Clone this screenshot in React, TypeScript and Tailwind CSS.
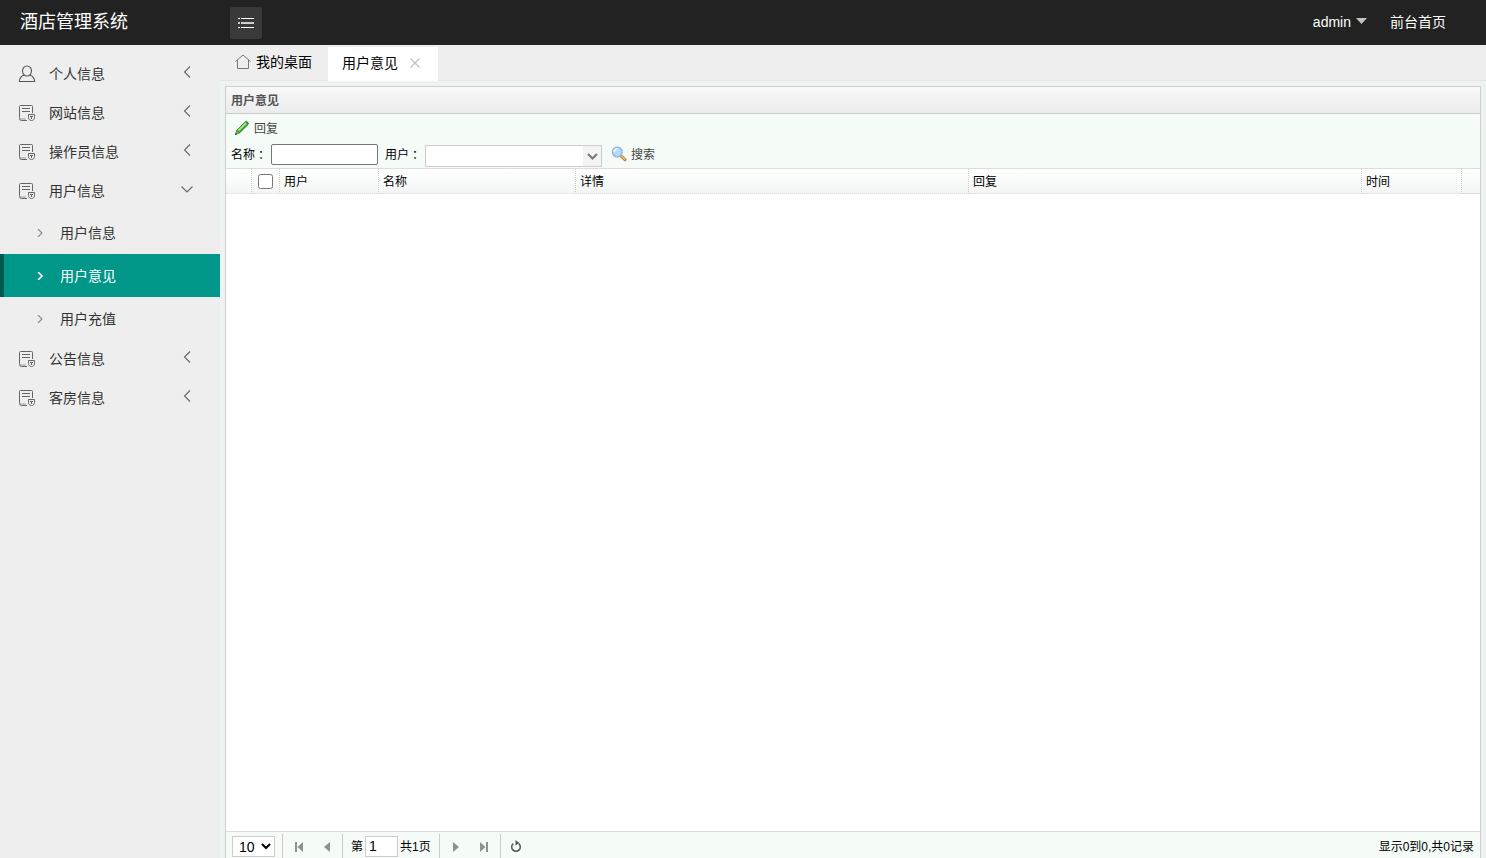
import { useState } from 'react'
import type { ReactNode } from 'react'

const menus = [
  { label: '个人信息', icon: 'user' },
  { label: '网站信息', icon: 'form' },
  { label: '操作员信息', icon: 'form' },
  { label: '用户信息', icon: 'form', children: ['用户信息', '用户意见', '用户充值'] },
  { label: '公告信息', icon: 'form' },
  { label: '客房信息', icon: 'form' },
]

const columns = [
  { label: '用户', width: 'w-[99px]' },
  { label: '名称', width: 'w-[197px]' },
  { label: '详情', width: '' },
  { label: '回复', width: '' },
  { label: '时间', width: 'w-[100px]' },
]

const UserIcon = () => (
  <svg width="18" height="18" viewBox="0 0 18 18" fill="none" stroke="#555" strokeWidth="1.1">
    <ellipse cx="9" cy="6" rx="4.500" ry="5" />
    <path d="M6.300 10C3.600 10.800 1.600 13 1.300 16.500h15.400c-.3-3.500-2.300-5.700-5-6.500" strokeLinejoin="round" />
  </svg>
)

const FormIcon = () => (
  <svg width="18" height="18" viewBox="0 0 18 18" fill="none" stroke="#666" strokeWidth="1">
    <path d="M9 16.500H3.500a2 2 0 0 1-2-2v-12a1 1 0 0 1 1-1h11a1 1 0 0 1 1 1v6.500" />
    <path d="M4 4.500h8M4 7.500h8" />
    <path d="M1.500 13.500q0 1.500 1.500 1.500h5" stroke="#999" />
    <path d="M10.500 10.500h6v3c0 1.800-1.200 3-3 3s-3-1.200-3-3z" />
    <path d="M12 12.500h3M13.500 12.500v2.500" />
  </svg>
)

const Chevron = ({ open }: { open: boolean }) => (
  <svg width="12" height="12" viewBox="0 0 12 12" fill="none" stroke="#666" strokeWidth="1.1">
    {open ? <path d="M.5 3.500 6 9l5.500-5.500" /> : <path d="M9 .5 3.500 6 9 11.500" />}
  </svg>
)

const HomeIcon = () => (
  <svg width="16" height="16" viewBox="0 0 16 16" fill="none" stroke="#777" strokeWidth="1">
    <path d="M.5 7.500 8 1l7.500 6.500M2.500 6v8.500h11V6" />
  </svg>
)

const PencilIcon = () => (
  <svg width="16" height="16" viewBox="0 0 16 16">
    <path d="M1.500 14.500 3 10.300 11 2.100q1.300-1.200 2.600 0t.2 2.600L5.600 12.800z" fill="#3fa827" stroke="#1f7a14" strokeWidth="1" />
    <path d="M4.300 10.700 12 3" stroke="#a9e58d" strokeWidth="1.800" />
    <path d="m1.500 14.500 1.100-3.200 2 1.900z" fill="#e9e3b4" stroke="#1f7a14" strokeWidth=".5" />
    <path d="m1.200 14.800.7-1.900 1.200 1.200z" fill="#222" />
  </svg>
)

const SearchIcon = () => (
  <svg width="16" height="16" viewBox="0 0 16 16">
    <path d="m10.400 10.200 3.600 3.400" stroke="#b97a3c" strokeWidth="3" strokeLinecap="round" />
    <path d="m10.600 10.200 3.200 3" stroke="#f0b26a" strokeWidth="1.800" strokeLinecap="round" />
    <circle cx="6.300" cy="6" r="4.900" fill="#b5d9fa" stroke="#8fb0da" strokeWidth="1.300" />
    <path d="M3.300 6c0-2 1.300-3.200 3.200-3.200" stroke="#f1f9ff" strokeWidth="1.500" fill="none" />
  </svg>
)

const PagerButton = ({ label, children }: { label: string; children: ReactNode }) => (
  <button type="button" aria-label={label} className="flex h-6 w-7 items-center justify-center">
    <svg width="16" height="16" viewBox="0 0 16 16" fill="#8c9191">
      {children}
    </svg>
  </button>
)

const Separator = () => <span className="h-6 w-px bg-[#ccc]" />

const Header = () => (
  <header className="flex h-[45px] shrink-0 items-center bg-[#222] text-white">
    <h1 className="w-[230px] pb-0.5 pl-5 text-lg leading-6">酒店管理系统</h1>
    <button type="button" aria-label="菜单" className="flex size-8 items-center justify-center rounded-xs bg-[#393939]">
      <svg width="18" height="12" viewBox="0 0 18 12" stroke="#fff" strokeWidth="1">
        <path d="M1 1.500h2M4 1.500h13M1 10.500h2M4 10.500h13" />
        <path d="M1 6h2M4 6h13" strokeWidth="1.600" />
      </svg>
    </button>
    <nav className="ml-auto flex items-center pr-10 pb-0.5 text-sm leading-5">
      <button type="button" className="flex items-center gap-1">
        admin
        <svg width="13" height="10" viewBox="0 0 13 10" fill="#c2c2c2">
          <path d="M1 1h11L6.500 7z" />
        </svg>
      </button>
      <a href="#home" className="ml-[22px]">
        前台首页
      </a>
    </nav>
  </header>
)

const Sidebar = () => {
  const [active, setActive] = useState('用户意见')

  return (
    <aside className="w-[220px] shrink-0 pt-[10px] text-sm text-[#333]">
      <ul>
        {menus.map((menu) => (
          <li key={menu.label}>
            <button type="button" className="flex h-[39px] w-full items-center pr-[27px] pb-px pl-[18px] text-left">
              {menu.icon === 'user' ? <UserIcon /> : <FormIcon />}
              <span className="ml-[13px] grow">{menu.label}</span>
              <span className="pb-1">
                <Chevron open={!!menu.children} />
              </span>
            </button>
            {menu.children && (
              <ul>
                {menu.children.map((child) => (
                  <li key={child}>
                    <a
                      href="#menu"
                      onClick={() => setActive(child)}
                      className={
                        child === active
                          ? 'flex h-[43px] items-center border-l-4 border-[#00594f] bg-[#009688] pl-8 text-white'
                          : 'flex h-[43px] items-center border-l-4 border-transparent pl-8 text-[#333]'
                      }
                    >
                      <svg
                        width="8"
                        height="8"
                        viewBox="0 0 8 8"
                        fill="none"
                        stroke={child === active ? '#fff' : '#888'}
                        strokeWidth={child === active ? 1.6 : 1.1}
                      >
                        <path d="m2 0 4 4-4 4" />
                      </svg>
                      <span className="ml-4">{child}</span>
                    </a>
                  </li>
                ))}
              </ul>
            )}
          </li>
        ))}
      </ul>
    </aside>
  )
}

const Tabs = () => (
  <div className="flex h-9 shrink-0 items-stretch border-b border-[#e2e6e5] bg-[#eee] text-sm text-black">
    <button type="button" className="flex items-center gap-[5px] pr-4 pb-0.5 pl-[15px]">
      <HomeIcon />
      我的桌面
    </button>
    <div className="mt-0.5 -mb-px flex items-center bg-white pr-[18px] pb-0.5 pl-[14px]">
      <button type="button">用户意见</button>
      <button type="button" aria-label="关闭" className="ml-3">
        <svg width="10" height="10" viewBox="0 0 10 10" stroke="#c2c2c2" strokeWidth="1.300">
          <path d="m.5.5 9 9M9.500.5l-9 9" />
        </svg>
      </button>
    </div>
  </div>
)

// The TC face centres the full-width colon in its em box.
const Colon = () => <span className="font-['Noto_Sans_CJK_TC',sans-serif] leading-4">：</span>

const Toolbar = () => (
  <div className="border-b border-[#ddd] bg-[#f5fbf7] pl-[5px]">
    <div className="flex h-7 items-center">
      <button type="button" className="flex items-center gap-1 pl-[3px] text-[#444]">
        <PencilIcon />
        <span className="pt-0.5">回复</span>
      </button>
    </div>
    <form className="flex h-[26px] items-center pb-0.5" onSubmit={(e) => e.preventDefault()}>
      <label htmlFor="name" className="flex w-10 items-center pt-0.5">
        名称
        <Colon />
      </label>
      <input id="name" type="text" className="h-[21px] w-[107px] rounded-xs border border-[#767676] bg-white px-1" />
      <label htmlFor="user" className="ml-[7px] flex w-10 items-center pt-0.5">
        用户
        <Colon />
      </label>
      <div className="relative mt-1 h-[22px] w-[177px]">
        <select id="user" className="size-full appearance-none border border-[#ccc] bg-white px-1">
          <option></option>
        </select>
        <span className="pointer-events-none absolute top-px right-px flex h-5 w-[18px] items-center justify-center bg-[#f3f3f3]">
          <svg width="11" height="7" viewBox="0 0 11 7" fill="none" stroke="#777" strokeWidth="2">
            <path d="m1 1 4.500 4.500L10 1" />
          </svg>
        </span>
      </div>
      <button type="submit" className="ml-[9px] flex items-center gap-1 text-[#444]">
        <SearchIcon />
        <span className="pt-0.5">搜索</span>
      </button>
    </form>
  </div>
)

const Grid = () => (
  <div className="min-h-0 grow overflow-auto bg-white">
    <table className="w-full table-fixed border-separate border-spacing-0 bg-linear-to-b from-white to-[#f3f5f5]">
      <thead>
        <tr className="h-[25px] text-left *:border-b *:border-b-[#ddd] *:p-0 *:font-normal">
          <th className="w-[26px] border-r border-dotted border-r-[#ccc]" />
          <th className="w-7 border-r border-dotted border-r-[#ccc]">
            <input type="checkbox" aria-label="全选" className="mx-auto block size-[15px]" />
          </th>
          {columns.map((column) => (
            <th key={column.label} className={`border-r border-dotted border-r-[#ccc] ${column.width}`}>
              <span className="block pt-0.5 pl-1">{column.label}</span>
            </th>
          ))}
          <th className="w-[18px]" />
        </tr>
      </thead>
      <tbody />
    </table>
  </div>
)

const Pager = () => (
  <div className="flex h-[27px] shrink-0 items-end border-t border-[#ddd] bg-[#f5fbf7] px-1.5">
    <select aria-label="每页记录数" className="mb-px h-[21px] w-[43px] border border-[#ccc] bg-white pl-0.5 text-sm">
      <option>10</option>
      <option>20</option>
    </select>
    <div className="ml-[7px] flex h-6 items-center">
      <Separator />
      <span className="ml-0.5 flex pt-0.5">
        <PagerButton label="首页">
          <path d="M4 3h2v10H4zM12 3v10L6.500 8z" />
        </PagerButton>
        <PagerButton label="上一页">
          <path d="M11 3v10L5 8z" />
        </PagerButton>
      </span>
      <span className="ml-px flex items-center">
        <Separator />
        <label htmlFor="page" className="ml-2 pt-0.5">第</label>
      </span>
      <input id="page" type="text" defaultValue="1" className="ml-0.5 h-[21px] w-[33px] border border-[#ccc] bg-white px-[3px] text-sm" />
      <span className="mx-0.5 pt-0.5">共1页</span>
      <span className="ml-1.5 flex items-center">
        <Separator />
      </span>
      <span className="mx-0.5 flex pt-0.5">
        <PagerButton label="下一页">
          <path d="M5 3v10l6-5z" />
        </PagerButton>
        <PagerButton label="末页">
          <path d="M4 3v10l5.500-5zM10 3h2v10h-2z" />
        </PagerButton>
      </span>
      <Separator />
      <span className="ml-px flex pt-0.5">
        <PagerButton label="刷新">
          <path d="M5.300 4.600a4.300 4.300 0 1 0 5.400 0" fill="none" stroke="#555" strokeWidth="1.500" />
          <path d="M7.500 1v5.500L11.300 4z" fill="#555" />
        </PagerButton>
      </span>
    </div>
    <span className="ml-auto flex h-6 items-center pt-0.5">显示0到0,共0记录</span>
  </div>
)

export default function App() {
  return (
    <div className="flex h-screen flex-col overflow-hidden bg-[#eee] font-['Liberation_Sans','Noto_Sans_CJK_SC',sans-serif]">
      <Header />
      <div className="flex min-h-0 grow">
        <Sidebar />
        <main className="flex min-w-0 grow flex-col bg-[#eef2f1]">
          <Tabs />
          <section className="mx-[5px] mt-[5px] flex min-h-0 grow flex-col border border-b-0 border-[#ccd1cf] text-xs text-black">
            <h2 className="flex h-[27px] shrink-0 items-center border-b border-[#ccc] bg-linear-to-b from-[#f8f8f8] to-[#ececec] px-[5px] pt-0.5 font-bold text-[#555]">
              用户意见
            </h2>
            <Toolbar />
            <Grid />
            <Pager />
          </section>
        </main>
      </div>
    </div>
  )
}
